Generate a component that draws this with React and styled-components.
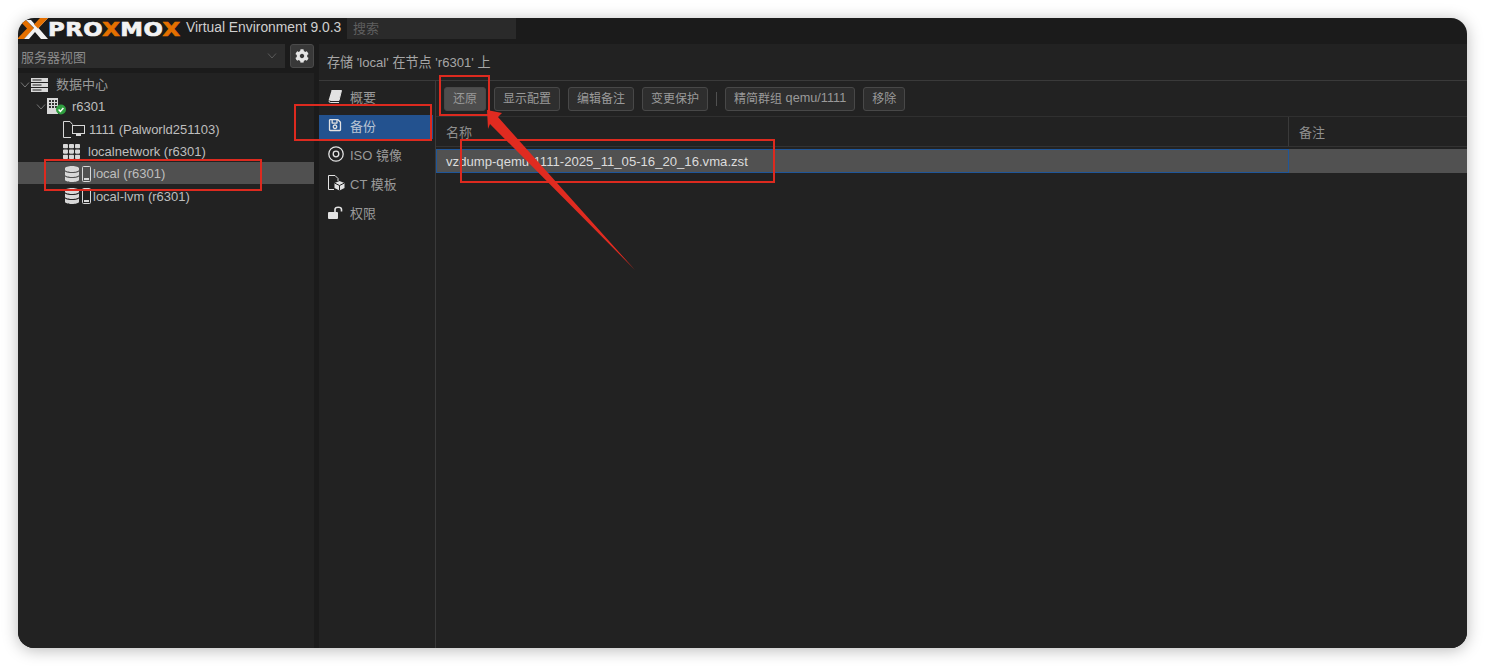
import React from 'react';
import styled, { createGlobalStyle } from 'styled-components';
import { FaCog, FaDatabase, FaRegSave, FaTh } from 'react-icons/fa';

const GlobalStyle = createGlobalStyle`
  html, body { margin: 0; background: #fff; }
  body { font-family: "Liberation Sans", "Noto Sans CJK SC", sans-serif; font-size: 13px; }
`;

const Page = styled.div`
  width: 1485px;
  height: 666px;
  padding: 18px;
  box-sizing: border-box;
  overflow: hidden;
`;

const Window = styled.div`
  position: relative;
  width: 1449px;
  height: 630px;
  border-radius: 16px;
  background: #1b1b1b;
  box-shadow: 0 2px 16px rgba(0, 0, 0, 0.28);
  overflow: hidden;
  display: flex;
  flex-direction: column;
`;

const TopBar = styled.div`
  height: 26px;
  display: flex;
  align-items: flex-start;
  flex: none;
`;

const Logo = styled.div`
  display: flex;
  align-items: center;
  height: 21px;
  width: 168px;
  flex: none;
`;

const Wordmark = styled.span`
  display: inline-block;
  font-family: "DejaVu Sans", sans-serif;
  font-weight: 700;
  font-size: 20px;
  letter-spacing: 0.4px;
  color: #f2f2f2;
  -webkit-text-stroke: 0.7px currentColor;
  transform: scaleX(1.14);
  transform-origin: left center;
  white-space: nowrap;
`;

const Orange = styled.span`
  color: #e57000;
`;

const Version = styled.div`
  height: 19px;
  line-height: 19px;
  font-size: 13.85px;
  color: #cfcfcf;
  width: 161px;
  flex: none;
  white-space: nowrap;
`;

const Search = styled.div`
  width: 169px;
  height: 21px;
  line-height: 21px;
  background: #2a2a2a;
  color: #5f5f5f;
  padding-left: 6px;
  box-sizing: border-box;
`;

const Main = styled.div`
  flex: 1;
  display: flex;
  gap: 5px;
  min-height: 0;
`;

const Side = styled.div`
  width: 296px;
  flex: none;
  display: flex;
  flex-direction: column;
  gap: 5px;
`;

const ViewRow = styled.div`
  display: flex;
  gap: 5px;
  height: 24px;
  flex: none;
`;

const ViewSelect = styled.div`
  flex: 1;
  background: #2c2c2c;
  color: #8a8a8a;
  padding: 0 7px 0 3px;
  display: flex;
  align-items: center;
  justify-content: space-between;
  font-size: 13px;
`;

const GearButton = styled.div`
  width: 24px;
  box-sizing: border-box;
  border: 1px solid #4a4a4a;
  border-radius: 3px;
  background: #383838;
  color: #e4e4e4;
  display: flex;
  align-items: center;
  justify-content: center;
`;

const Tree = styled.div`
  flex: 1;
  background: #222;
`;

const TreeRow = styled.div`
  height: 22.3px;
  box-sizing: border-box;
  display: flex;
  align-items: center;
  padding-left: ${p => p.$indent}px;
  padding-top: 1px;
  background: ${p => (p.$selected ? '#505050' : 'transparent')};
  color: #bebebe;
  white-space: nowrap;
`;

const Twisty = styled.svg`
  width: 10px;
  height: 6px;
  flex: none;
  margin-right: 1px;
  fill: none;
  stroke: #777;
  stroke-width: 1;
`;

const TreeIcon = styled.span`
  display: inline-flex;
  align-items: center;
  flex: none;
  width: ${p => p.$w}px;
  color: #d8d8d8;
`;

const TreeLabelMuted = styled.span`
  color: #9a9a9a;
  margin-top: -2px;
`;

const StorageGlyph = styled.span`
  display: inline-flex;
  align-items: center;
  gap: 2px;
`;

const Content = styled.div`
  flex: 1;
  min-width: 0;
  display: flex;
  flex-direction: column;
  background: #222;
`;

const PanelTitle = styled.div`
  height: 36px;
  line-height: 38px;
  flex: none;
  padding-left: 8px;
  font-size: 13.1px;
  color: #a6a6a6;
  border-bottom: 1px solid #3a3a3a;
`;

const Body = styled.div`
  flex: 1;
  display: flex;
  min-height: 0;
`;

const Tabs = styled.div`
  width: 116px;
  flex: none;
  border-right: 1px solid #3a3a3a;
  display: flex;
  flex-direction: column;
  gap: 5px;
  padding-top: 5px;
`;

const Tab = styled.div`
  height: 24px;
  width: 114px;
  display: flex;
  align-items: center;
  padding: 0 0 4px 9px;
  box-sizing: border-box;
  background: ${p => (p.$active ? '#23528f' : 'transparent')};
  color: ${p => (p.$active ? '#b8c4d4' : '#9a9a9a')};
  white-space: nowrap;
`;

const TabIcon = styled.span`
  display: inline-flex;
  align-items: center;
  justify-content: flex-start;
  width: 22px;
  flex: none;
  color: #e2e2e2;
`;

const Detail = styled.div`
  flex: 1;
  min-width: 0;
  display: flex;
  flex-direction: column;
`;

const Toolbar = styled.div`
  height: 36px;
  flex: none;
  display: flex;
  align-items: center;
  gap: 8px;
  padding-left: 8px;
  box-sizing: border-box;
  border-bottom: 1px solid #303030;
`;

const Button = styled.div`
  height: 24px;
  box-sizing: border-box;
  padding: 0 8px 2px;
  display: flex;
  align-items: center;
  border: 1px solid #484848;
  border-radius: 3px;
  font-size: 12px;
  background: ${p => (p.$active ? '#4d4d4d' : '#2e2e2e')};
  color: #9a9a9a;
  white-space: pre;
`;

const ButtonLatin = styled.span`
  font-size: 12.7px;
`;

const Separator = styled.div`
  width: 1px;
  height: 14px;
  background: #505050;
`;

const GridHead = styled.div`
  height: 30px;
  flex: none;
  display: flex;
  border-bottom: 1px solid #333;
  box-sizing: border-box;
  color: #8f8f8f;
`;

const HeadCell = styled.div`
  width: ${p => p.$w}px;
  flex: ${p => (p.$w ? 'none' : 1)};
  padding-left: 10px;
  line-height: 31px;
  box-sizing: border-box;
  border-right: ${p => (p.$w ? '1px solid #3a3a3a' : 'none')};
`;

const GridRow = styled.div`
  margin-top: 2px;
  height: 24px;
  flex: none;
  display: flex;
  background: #515151;
`;

const SelectedCell = styled.div`
  width: 853px;
  flex: none;
  box-sizing: border-box;
  border: 1px solid #1f5699;
  padding-left: 9px;
  line-height: 23px;
  font-size: 13.13px;
  color: #dcdcdc;
  white-space: nowrap;
`;

const Mark = styled.div`
  position: absolute;
  left: ${p => p.$x}px;
  top: ${p => p.$y}px;
  width: ${p => p.$w}px;
  height: ${p => p.$h}px;
  box-sizing: border-box;
  border: 2px solid #dd2a1f;
  pointer-events: none;
`;

const Arrow = styled.svg`
  position: absolute;
  left: 0;
  top: 0;
  pointer-events: none;
`;

const ProxmoxMark = () => (
  <svg width="30" height="21" viewBox="0 0 30 21" style={{ flex: 'none' }}>
    <path d="M-1 21 L9 10.5 L-1 0 L6 0 L16 10.5 L6 21 Z" fill="#e57000" />
    <path d="M30 0 L20.5 10 L30 21 L23 21 L17 14 L11 21 L6 21 L16 10 L8 2 L13 2 L17 6.5 L23 0 Z" fill="#f2f2f2" />
    <path d="M30 0 L20 10.5 L16 6.5 L22 0 Z" fill="#e57000" />
  </svg>
);

const DatacenterIcon = () => (
  <svg width="17" height="14" viewBox="0 0 17 14">
    <rect x="0" y="0" width="17" height="4" fill="#d8d8d8" />
    <rect x="0" y="5" width="17" height="4" fill="#d8d8d8" />
    <rect x="0" y="10" width="17" height="4" fill="#d8d8d8" />
    <rect x="1.5" y="1.5" width="9" height="1" fill="#222" />
    <rect x="1.5" y="6.5" width="9" height="1" fill="#222" />
    <rect x="1.5" y="11.5" width="9" height="1" fill="#222" />
  </svg>
);

const NodeIcon = () => (
  <svg width="19" height="17" viewBox="0 0 19 17">
    <rect x="0" y="0" width="11" height="16" fill="#d8d8d8" />
    {[2, 5, 8].map(y => (
      <g key={y}>
        <rect x="2" y={y} width="2" height="2" fill="#333" />
        <rect x="5" y={y} width="2" height="2" fill="#333" />
        <rect x="8" y={y} width="2" height="2" fill="#333" />
      </g>
    ))}
    <circle cx="14" cy="11.5" r="5" fill="#2f9e3f" />
    <path d="M11.6 11.5 L13.4 13.4 L16.4 9.9" stroke="#fff" strokeWidth="1.5" fill="none" />
  </svg>
);

const VmIcon = () => (
  <svg width="26" height="17" viewBox="0 0 26 17">
    <path d="M.5 16.5 V.5 H7 L9.5 3.5 M.5 16.5 H8" stroke="#d8d8d8" fill="none" />
    <rect x="9.5" y="4.5" width="12" height="8" fill="#222" stroke="#d8d8d8" />
    <rect x="13" y="13" width="5" height="2" fill="#d8d8d8" />
  </svg>
);

const StorageIcon = () => (
  <StorageGlyph>
    <FaDatabase size={16} />
    <svg width="9" height="16" viewBox="0 0 9 16">
      <rect x=".5" y=".5" width="8" height="15" rx="1" fill="none" stroke="#d8d8d8" />
      <rect x="2" y="12" width="5" height="2" fill="#d8d8d8" />
    </svg>
  </StorageGlyph>
);

const BookIcon = () => (
  <svg width="14" height="13" viewBox="0 0 14 13">
    <path d="M3.5 .5 H13.5 L11 10.5 H2.2 C.8 10.5 .8 12.5 2.2 12.5 H11" fill="none" stroke="#e2e2e2" />
    <path d="M3.5 .5 H13.5 L11 10 H2 C1.2 10 .8 10.2 .5 10.6 Z" fill="#e2e2e2" />
  </svg>
);

const DiscIcon = () => (
  <svg width="16" height="16" viewBox="0 0 16 16">
    <circle cx="8" cy="8" r="7.2" fill="none" stroke="#e2e2e2" strokeWidth="1.3" />
    <circle cx="8" cy="8" r="2.8" fill="none" stroke="#e2e2e2" strokeWidth="1.3" />
  </svg>
);

const TemplateIcon = () => (
  <svg width="17" height="16" viewBox="0 0 17 16">
    <path d="M.5 14.5 V.5 H7 L10 3.5 V6 M.5 14.5 H6" stroke="#e2e2e2" fill="none" />
    <path d="M11.5 6 L16.5 8 V13 L11.5 15.5 L6.5 13 V8 Z" fill="#e2e2e2" />
    <path d="M6.5 8 L11.5 10.5 L16.5 8 M11.5 10.5 V15.5" stroke="#222" fill="none" />
  </svg>
);

const UnlockIcon = () => (
  <svg width="15" height="13" viewBox="0 0 15 13">
    <rect x="0" y="6" width="10" height="7" rx="1" fill="#e2e2e2" />
    <path d="M7 6 V3.5 C7 .5 13.5 .5 13.5 3.5 V5.5" fill="none" stroke="#e2e2e2" strokeWidth="1.6" />
  </svg>
);

const treeChevron = (
  <Twisty viewBox="0 0 10 6">
    <path d="M1 .5 L5 5 L9 .5" />
  </Twisty>
);

const toolbarButtons = ['显示配置', '编辑备注', '变更保护'];

const App = () => (
  <Page>
    <GlobalStyle />
    <Window>
      <TopBar>
        <Logo>
          <ProxmoxMark />
          <Wordmark>PRO<Orange>X</Orange>MO<Orange>X</Orange></Wordmark>
        </Logo>
        <Version>Virtual Environment 9.0.3</Version>
        <Search>搜索</Search>
      </TopBar>

      <Main>
        <Side>
          <ViewRow>
            <ViewSelect>
              服务器视图
              <Twisty viewBox="0 0 10 6"><path d="M1 .5 L5 5 L9 .5" stroke="#5a5a5a" /></Twisty>
            </ViewSelect>
            <GearButton><FaCog size={14} /></GearButton>
          </ViewRow>
          <Tree>
            <TreeRow $indent={2}>
              {treeChevron}
              <TreeIcon $w={25}><DatacenterIcon /></TreeIcon>
              <TreeLabelMuted>数据中心</TreeLabelMuted>
            </TreeRow>
            <TreeRow $indent={18}>
              {treeChevron}
              <TreeIcon $w={25}><NodeIcon /></TreeIcon>
              r6301
            </TreeRow>
            <TreeRow $indent={45}>
              <TreeIcon $w={26}><VmIcon /></TreeIcon>
              1111 (Palworld251103)
            </TreeRow>
            <TreeRow $indent={45}>
              <TreeIcon $w={25}><FaTh size={17} /></TreeIcon>
              localnetwork (r6301)
            </TreeRow>
            <TreeRow $indent={46} $selected>
              <TreeIcon $w={29}><StorageIcon /></TreeIcon>
              local (r6301)
            </TreeRow>
            <TreeRow $indent={46}>
              <TreeIcon $w={29}><StorageIcon /></TreeIcon>
              local-lvm (r6301)
            </TreeRow>
          </Tree>
        </Side>

        <Content>
          <PanelTitle>存储 'local' 在节点 'r6301' 上</PanelTitle>
          <Body>
            <Tabs>
              <Tab><TabIcon><BookIcon /></TabIcon>概要</Tab>
              <Tab $active><TabIcon><FaRegSave size={14} /></TabIcon>备份</Tab>
              <Tab><TabIcon><DiscIcon /></TabIcon>ISO 镜像</Tab>
              <Tab><TabIcon><TemplateIcon /></TabIcon>CT 模板</Tab>
              <Tab><TabIcon><UnlockIcon /></TabIcon>权限</Tab>
            </Tabs>
            <Detail>
              <Toolbar>
                <Button $active>还原</Button>
                {toolbarButtons.map(label => <Button key={label}>{label}</Button>)}
                <Separator />
                <Button>精简群组<ButtonLatin> qemu/1111</ButtonLatin></Button>
                <Button>移除</Button>
              </Toolbar>
              <GridHead>
                <HeadCell $w={853}>名称</HeadCell>
                <HeadCell>备注</HeadCell>
              </GridHead>
              <GridRow>
                <SelectedCell>vzdump-qemu-1111-2025_11_05-16_20_16.vma.zst</SelectedCell>
              </GridRow>
            </Detail>
          </Body>
        </Content>
      </Main>

      <Mark $x={26} $y={141} $w={218} $h={32} />
      <Mark $x={276} $y={86} $w={138} $h={37} />
      <Mark $x={421} $y={57} $w={51} $h={41} />
      <Mark $x={442} $y={121} $w={315} $h={44} />
      <Arrow width="1449" height="630" viewBox="18 18 1449 630">
        <polygon points="487,110 502,113 498,117 635,270 490,124 488,129" fill="#e02b20" />
      </Arrow>
    </Window>
  </Page>
);

export default App;
